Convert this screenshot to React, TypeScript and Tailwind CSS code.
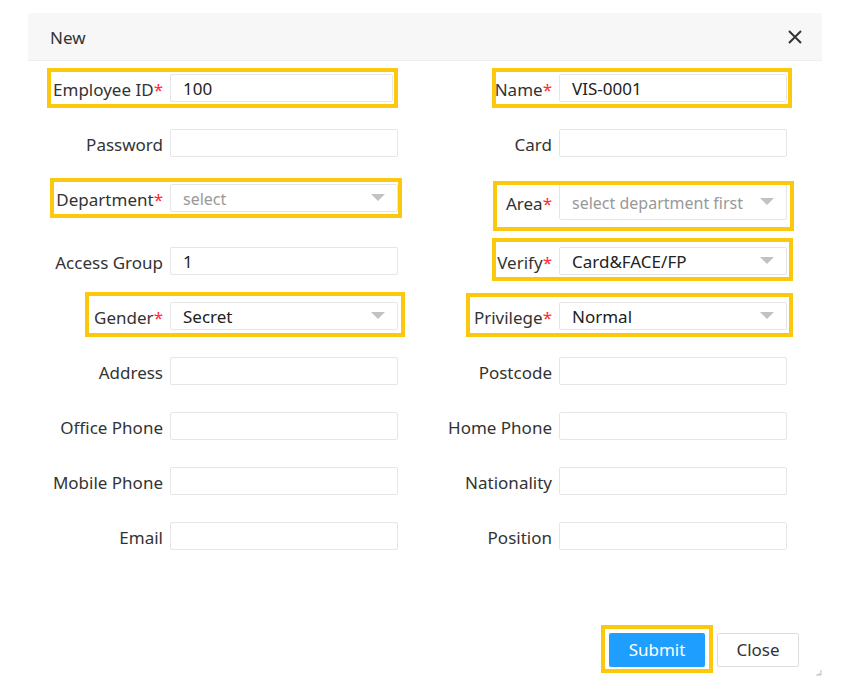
import type { ReactNode } from 'react';

type Field = {
  label: string;
  required?: boolean;
  value?: string;
  placeholder?: string;
  select?: boolean;
  tall?: boolean;
  width?: string;
};

const rows: [Field, Field][] = [
  [
    { label: 'Employee ID', required: true, value: '100', width: 'w-[223px]' },
    { label: 'Name', required: true, value: 'VIS-0001' },
  ],
  [{ label: 'Password' }, { label: 'Card' }],
  [
    { label: 'Department', required: true, placeholder: 'select', select: true },
    { label: 'Area', required: true, placeholder: 'select department first', select: true, tall: true },
  ],
  [
    { label: 'Access Group', value: '1' },
    { label: 'Verify', required: true, value: 'Card&FACE/FP', select: true },
  ],
  [
    { label: 'Gender', required: true, value: 'Secret', select: true },
    { label: 'Privilege', required: true, value: 'Normal', select: true },
  ],
  [{ label: 'Address' }, { label: 'Postcode' }],
  [{ label: 'Office Phone' }, { label: 'Home Phone' }],
  [{ label: 'Mobile Phone' }, { label: 'Nationality' }],
  [{ label: 'Email' }, { label: 'Position' }],
];

// yellow highlight boxes drawn over the form
const highlights = [
  'left-[47px] top-[68px] w-[351px] h-[40px]',
  'left-[492px] top-[68px] w-[300px] h-[40px]',
  'left-[50px] top-[178px] w-[352px] h-[40px]',
  'left-[493px] top-[181px] w-[301px] h-[50px]',
  'left-[492px] top-[238px] w-[301px] h-[43px]',
  'left-[85px] top-[292px] w-[320px] h-[45px]',
  'left-[466px] top-[293px] w-[327px] h-[44px]',
  'left-[601px] top-[625px] w-[112px] h-[48px]',
];

function Arrow() {
  return (
    <svg width="14" height="8" viewBox="0 0 14 8" className="absolute right-[12px] top-1/2 -translate-y-1/2">
      <path d="M0 0 L14 0 L7 7 Z" fill="#c2c2c2" />
    </svg>
  );
}

function Control({ field }: { field: Field }) {
  const height = field.tall ? 'h-[36px]' : 'h-[28px]';
  return (
    <div
      className={`relative ${field.width ?? 'w-[228px]'} ${height} flex items-center rounded-[2px] border border-[#e6e6e6] bg-white pl-[12px] text-[17px]`}>
      {field.value ? (
        <span className="translate-y-[1px] text-[#222]">{field.value}</span>
      ) : field.placeholder ? (
        <span className="translate-y-[1px] text-[16px] text-[#999]">{field.placeholder}</span>
      ) : null}
      {field.select && <Arrow />}
    </div>
  );
}

function Item({ field, labelWidth }: { field: Field; labelWidth: string }): ReactNode {
  return (
    <div className="flex items-center">
      <div className={`${labelWidth} translate-y-[2px] pr-[7px] text-right text-[17px] text-[#333]`}>
        {field.label}
        {field.required && <span className="text-[#ff2d2d]">*</span>}
      </div>
      <Control field={field} />
    </div>
  );
}

export default function App() {
  return (
    <div
      className="relative h-[695px] w-[850px] overflow-hidden bg-white"
      style={{ fontFamily: '"Noto Sans", "Open Sans", sans-serif' }}>
      <div className="ml-[28px] mt-[13px] w-[794px]">
        <div className="flex h-[48px] items-center justify-between border-b border-[#eeeeee] bg-[#f7f7f7] pl-[22px] pr-[20px]">
          <span className="translate-y-[1px] text-[17px] text-[#333]">New</span>
          <svg width="14" height="14" viewBox="0 0 14 14">
            <path d="M1 1 L13 13 M13 1 L1 13" stroke="#333" strokeWidth="2" />
          </svg>
        </div>

        <div className="flex flex-col gap-[27px] pt-[13px]">
          {rows.map(([left, right]) => (
            <div key={left.label} className="flex items-start">
              <Item field={left} labelWidth="w-[142px]" />
              <Item field={right} labelWidth={left.width ? 'w-[166px]' : 'w-[161px]'} />
            </div>
          ))}
        </div>

        <div className="mt-[83px] flex justify-end gap-[12px] pr-[23px]">
          <button className="h-[34px] w-[96px] rounded-[2px] bg-[#1e9fff] text-[17px] text-white">
            Submit
          </button>
          <button className="h-[34px] w-[82px] rounded-[2px] border border-[#dddddd] bg-white text-[17px] text-[#333]">
            Close
          </button>
        </div>
      </div>

      <svg width="6" height="6" viewBox="0 0 6 6" className="absolute left-[816px] top-[670px]">
        <path d="M5 0 V5 H0 M3 3 V5" stroke="#bbb" strokeWidth="1" fill="none" />
      </svg>

      {highlights.map((cls) => (
        <div key={cls} className={`pointer-events-none absolute border-[4px] border-[#fcc80e] ${cls}`} />
      ))}
    </div>
  );
}
